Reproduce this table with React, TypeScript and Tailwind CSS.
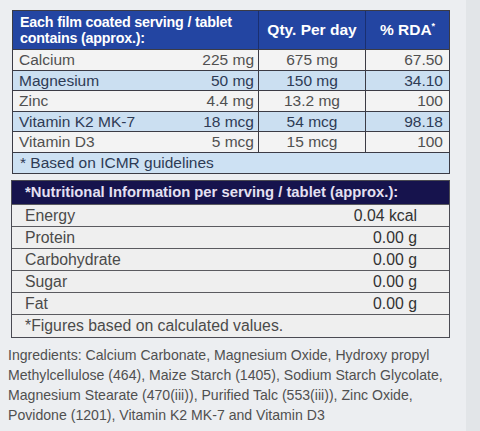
import React from "react";

const font = { fontFamily: '"Liberation Sans", Arial, sans-serif' };

const rows = [
  { name: "Calcium", amt: "225 mg", qty: "675 mg", rda: "67.50", blue: false },
  { name: "Magnesium", amt: "50 mg", qty: "150 mg", rda: "34.10", blue: true },
  { name: "Zinc", amt: "4.4 mg", qty: "13.2 mg", rda: "100", blue: false },
  { name: "Vitamin K2 MK-7", amt: "18 mcg", qty: "54 mcg", rda: "98.18", blue: true },
  { name: "Vitamin D3", amt: "5 mcg", qty: "15 mcg", rda: "100", blue: false },
];

const nutrition = [
  ["Energy", "0.04 kcal"],
  ["Protein", "0.00 g"],
  ["Carbohydrate", "0.00 g"],
  ["Sugar", "0.00 g"],
  ["Fat", "0.00 g"],
];

export default function App() {
  return (
    <div className="w-[480px] h-[431px] bg-[#eceef1] flex overflow-hidden" style={font}>
      <div className="w-[466px] pt-[10px] pl-[12px] flex flex-col">
        {/* dosage table */}
        <div className="w-[438px] border border-[#3b3b45] text-[15.5px] leading-none">
          <div className="grid grid-cols-[246px_107px_1fr] h-[38px] bg-[#2345a2] text-white font-bold">
            <div className="pl-[7px] flex flex-col justify-center text-[14.3px] leading-[16px] tracking-[-0.2px] border-r border-[#1a2f70]">
              <span>Each film coated serving / tablet</span>
              <span>contains (approx.):</span>
            </div>
            <div className="flex items-center justify-center border-r border-[#1a2f70]">Qty. Per day</div>
            <div className="flex items-center justify-center">% RDA<sup className="text-[9px] -top-1">*</sup></div>
          </div>
          {rows.map((r) => (
            <div
              key={r.name}
              className={`grid grid-cols-[246px_107px_1fr] h-[20.6px] border-t border-[#3b3b45] ${
                r.blue ? "bg-[#cbdff1] text-[#2e3b55]" : "bg-[#f3f3f3] text-[#505050]"
              }`}
            >
              <div className="pl-[6px] pr-[4px] flex items-center justify-between border-r border-[#3b3b45]">
                <span>{r.name}</span>
                <span>{r.amt}</span>
              </div>
              <div className="flex items-center justify-center border-r border-[#3b3b45]">{r.qty}</div>
              <div className="flex items-center justify-end pr-[6px]">{r.rda}</div>
            </div>
          ))}
          <div className="h-[21px] border-t border-[#3b3b45] bg-[#cde1f3] text-[#2e3b55] flex items-center px-[7px]">
            * Based on ICMR guidelines
          </div>
        </div>

        {/* nutrition table */}
        <div className="mt-[6px] w-[439px] -ml-px border border-[#4a4a52] text-[15.8px] leading-none text-[#4a4a4a]">
          <div className="h-[23px] bg-[#16134d] text-[#e4e0f2] font-bold text-[14.8px] flex items-center pl-[13px]">
            *Nutritional Information per serving / tablet (approx.):
          </div>
          {nutrition.map(([k, v]) => (
            <div key={k} className="h-[22px] border-t border-[#5a5a5f] bg-[#efefef] flex items-center justify-between pl-[13px] pr-[32px]">
              <span>{k}</span>
              <span className="text-[#333]">{v}</span>
            </div>
          ))}
          <div className="h-[23px] border-t border-[#5a5a5f] bg-[#efefef] flex items-center pl-[13px]">
            *Figures based on calculated values.
          </div>
        </div>

        <p className="mt-[7px] -ml-[4px] w-[452px] text-[14.1px] leading-[20px] text-[#505050]">
          Ingredients: Calcium Carbonate, Magnesium Oxide, Hydroxy propyl Methylcellulose (464), Maize Starch (1405), Sodium Starch Glycolate, Magnesium Stearate (470(iii)), Purified Talc (553(iii)), Zinc Oxide, Povidone (1201), Vitamin K2 MK-7 and Vitamin D3
        </p>
      </div>
      <div className="flex-1 bg-[#e2e5e8]" />
    </div>
  );
}
